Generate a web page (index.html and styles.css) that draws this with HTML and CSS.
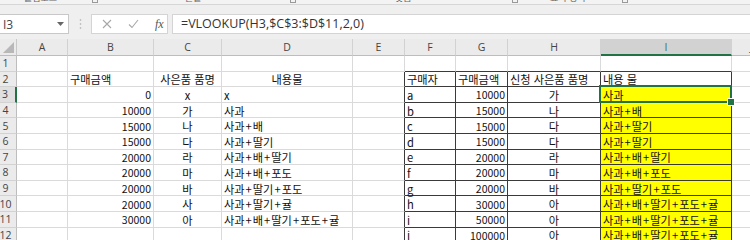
FILE: index.html
```html
<!DOCTYPE html>
<html lang="ko">
<head>
  <meta charset="UTF-8" />
  <title>사은품 VLOOKUP</title>
  <link rel="stylesheet" href="styles.css">
</head>
<body>
  <div class="ribbon">
    <span class="group">클립보드</span><span class="launcher"></span>
    <span class="group">글꼴</span><span class="launcher"></span>
    <span class="group">맞춤</span><span class="launcher"></span>
    <span class="group">표시 형식</span><span class="launcher"></span>
  </div>

  <div class="formula-bar">
    <div class="name-box">
      <span>I3</span>
      <svg width="7" height="4" viewBox="0 0 7 4"><path d="M0 0h7L3.5 4z" fill="#666"/></svg>
    </div>
    <div class="grip">
      <svg width="3" height="12" viewBox="0 0 3 12"><circle cx="1.5" cy="2" r="0.8" fill="#aaa"/><circle cx="1.5" cy="6" r="0.8" fill="#aaa"/><circle cx="1.5" cy="10" r="0.8" fill="#aaa"/></svg>
    </div>
    <div class="fn-box">
      <svg width="10" height="10" viewBox="0 0 10 10"><path d="M1 1l8 8M9 1l-8 8" stroke="#a8a8a8" stroke-width="1.1"/></svg>
      <svg width="11" height="10" viewBox="0 0 11 10"><path d="M1 5.5l3 3L10 1" stroke="#a8a8a8" stroke-width="1.1" fill="none"/></svg>
      <span class="fx">fx</span>
    </div>
    <div class="formula">=VLOOKUP(H3,$C$3:$D$11,2,0)</div>
  </div>

  <div class="sheet" id="sheet"></div>

  <script>
    // 열: 행머리, A ~ J
    const cols = ['', 'A', 'B', 'C', 'D', 'E', 'F', 'G', 'H', 'I', 'J'];

    const rows = [
      [],
      ['', '구매금액', '사은품 품명', '내용물', '', '구매자', '구매금액', '신청 사은품 품명', '내용 물'],
      ['', '0', 'x', 'x', '', 'a', '10000', '가', '사과'],
      ['', '10000', '가', '사과', '', 'b', '15000', '나', '사과+배'],
      ['', '15000', '나', '사과+배', '', 'c', '15000', '다', '사과+딸기'],
      ['', '15000', '다', '사과+딸기', '', 'd', '15000', '다', '사과+딸기'],
      ['', '20000', '라', '사과+배+딸기', '', 'e', '20000', '라', '사과+배+딸기'],
      ['', '20000', '마', '사과+배+포도', '', 'f', '20000', '마', '사과+배+포도'],
      ['', '20000', '바', '사과+딸기+포도', '', 'g', '20000', '바', '사과+딸기+포도'],
      ['', '20000', '사', '사과+딸기+귤', '', 'h', '30000', '아', '사과+배+딸기+포도+귤'],
      ['', '30000', '아', '사과+배+딸기+포도+귤', '', 'i', '50000', '아', '사과+배+딸기+포도+귤'],
      ['', '', '', '', '', 'j', '100000', '아', '사과+배+딸기+포도+귤']
    ];

    function align(col, r) {
      if (col === 'B' || col === 'G') return r === 2 ? 'left' : 'right num';
      if (col === 'C') return 'center';
      if (col === 'D') return r === 2 ? 'center' : 'left';
      if (col === 'H') return r === 2 ? 'left' : 'center';
      return 'left';
    }

    // '+' 양옆 여백을 주기 위해 span으로 감싼다
    function fill(cell, text) {
      text.split('+').forEach((part, i) => {
        if (i > 0) {
          const p = document.createElement('span');
          p.className = 'plus';
          p.textContent = '+';
          cell.appendChild(p);
        }
        cell.appendChild(document.createTextNode(part));
      });
    }

    const sheet = document.getElementById('sheet');

    cols.forEach((c, i) => {
      const h = document.createElement('div');
      h.className = i === 0 ? 'corner' : 'col-head';
      if (c === 'I') h.classList.add('active');
      h.textContent = c;
      sheet.appendChild(h);
    });

    rows.forEach((row, idx) => {
      const r = idx + 1;
      const head = document.createElement('div');
      head.className = 'row-head' + (r === 3 ? ' active' : '');
      head.textContent = r;
      sheet.appendChild(head);

      for (let i = 1; i < cols.length; i++) {
        const col = cols[i];
        const cell = document.createElement('div');
        cell.className = 'cell ' + align(col, r);
        const inTable = r >= 2 && 'FGHI'.includes(col);
        if (inTable) cell.classList.add('tb');
        if (col === 'E' && r >= 2) cell.classList.add('edge-r');
        if (r === 1 && 'FGHI'.includes(col)) cell.classList.add('edge-b');
        if (col === 'I' && r >= 3) cell.classList.add('hl');
        if (col === 'I' && r === 3) cell.classList.add('sel');
        fill(cell, row[i - 1] || '');
        sheet.appendChild(cell);
      }
    });
  </script>
</body>
</html>
```

FILE: styles.css
```css
* {
  box-sizing: border-box;
}

body {
  margin: 0;
  width: 750px;
  height: 240px;
  overflow: hidden;
  background: #efefef;
  font-family: 'Noto Sans CJK KR', 'Noto Sans', sans-serif;
  color: #111;
}

/* 리본 아래쪽만 살짝 보이는 부분 */
.ribbon {
  height: 5px;
  overflow: hidden;
  background: #f3f3f3;
  border-bottom: 1px solid #d6d6d6;
  display: grid;
  grid-template-columns: 68px 93px 105px 105px 117px 38px 72px 40px;
  padding-left: 24px;
  font-size: 9px;
  color: #666;
}

.group {
  margin-top: -8px;
  line-height: 12px;
  white-space: nowrap;
}

.launcher {
  width: 6px;
  height: 6px;
  margin-top: -3px;
  border: 1px solid #999;
}

.formula-bar {
  height: 34px;
  padding-top: 9px;
  display: flex;
  align-items: flex-start;
}

.name-box {
  width: 69px;
  height: 20px;
  background: #fff;
  border: 1px solid #c8c8c8;
  border-left: none;
  display: flex;
  align-items: center;
  justify-content: space-between;
  padding: 0 4px 0 3px;
  font-family: 'Open Sans', sans-serif;
  font-size: 12px;
  color: #444;
}

.grip {
  width: 22px;
  height: 20px;
  display: flex;
  align-items: center;
  justify-content: center;
}

.fn-box {
  width: 77px;
  height: 20px;
  background: #fff;
  border: 1px solid #d4d4d4;
  display: flex;
  align-items: center;
  gap: 16px;
  padding-left: 10px;
}

.fx {
  font-family: 'Liberation Serif', serif;
  font-style: italic;
  font-size: 12px;
  color: #555;
}

.formula {
  flex: 1;
  margin-left: 4px;
  height: 20px;
  background: #fff;
  border: 1px solid #d4d4d4;
  border-right: none;
  padding-left: 8px;
  font-family: 'Open Sans', sans-serif;
  font-size: 12.5px;
  line-height: 18px;
  color: #333;
  white-space: nowrap;
}

.sheet {
  display: grid;
  grid-template-columns: 17px 51px 86px 68px 131px 52px 51px 52px 93px 131px 40px;
  grid-template-rows: 17px repeat(12, 15.6px);
  background: #fff;
}

.corner,
.col-head,
.row-head {
  background: #ebebeb;
  font-family: 'Open Sans', sans-serif;
  font-size: 10.5px;
  color: #444;
  display: flex;
  align-items: center;
  justify-content: center;
}

.corner {
  border-right: 1px solid #c8c8c8;
  border-bottom: 1px solid #bdbdbd;
  position: relative;
}

.corner::after {
  content: '';
  position: absolute;
  right: 2px;
  bottom: 2px;
  border-left: 11px solid transparent;
  border-bottom: 11px solid #b8b8b8;
}

.col-head {
  border-right: 1px solid #d2d2d2;
  border-bottom: 1px solid #bdbdbd;
}

.col-head.active {
  background: #d2d2d2;
  color: #3e6a50;
  border-bottom: 2px solid #217346;
}

.row-head {
  border-right: 1px solid #bdbdbd;
  border-bottom: 1px solid #d2d2d2;
  padding-right: 5px;
}

.row-head.active {
  background: #e0e0e0;
  border-right: 2px solid #217346;
}

.cell {
  border-right: 1px solid #dadada;
  border-bottom: 1px solid #dadada;
  font-size: 11.2px;
  padding: 1px 2px 0;
  display: flex;
  align-items: center;
  white-space: pre;
  position: relative;
}

.plus {
  padding: 0 1px;
}

.cell.num {
  font-size: 10.5px;
}

.cell.left { justify-content: flex-start; }
.cell.center { justify-content: center; }
.cell.right { justify-content: flex-end; }

.cell.tb {
  border-right-color: #3a3a3a;
  border-bottom-color: #3a3a3a;
}

.cell.edge-r { border-right-color: #3a3a3a; }
.cell.edge-b { border-bottom-color: #3a3a3a; }

.cell.hl {
  background: #ffff00;
}

.cell.sel {
  z-index: 2;
}

.cell.sel::before {
  content: '';
  position: absolute;
  left: -2px;
  top: -2px;
  right: -1px;
  bottom: -1px;
  border: 2px solid #217346;
}

.cell.sel::after {
  content: '';
  position: absolute;
  right: -4px;
  bottom: -4px;
  width: 6px;
  height: 6px;
  background: #217346;
  border: 1px solid #fff;
}
```
